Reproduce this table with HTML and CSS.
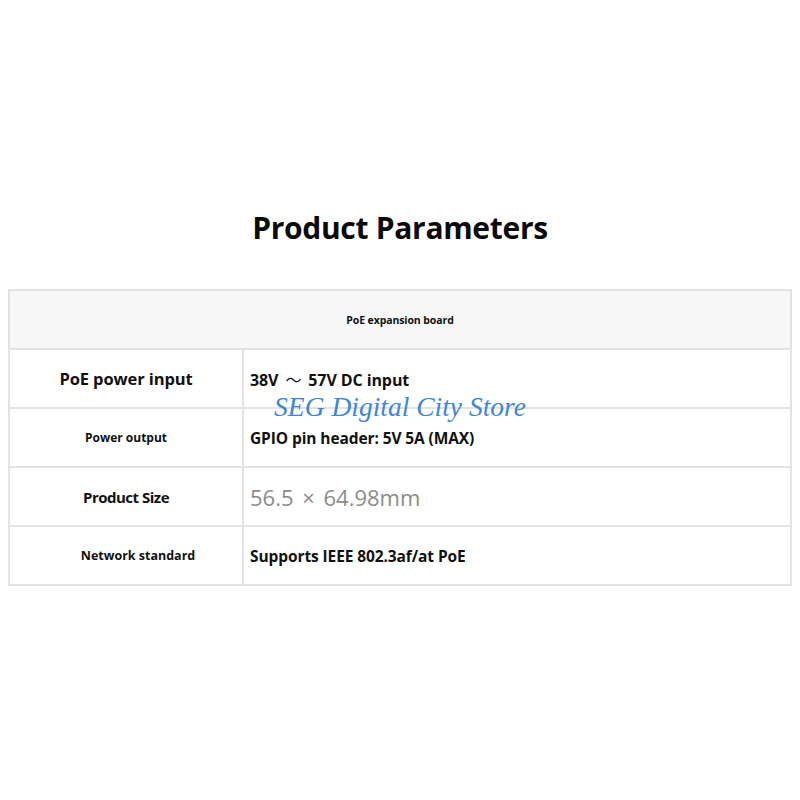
FILE: index.html
```html
<!DOCTYPE html>
<html>
<head>
<meta charset="utf-8">
<link rel="stylesheet" href="styles.css">
</head>
<body>
<div class="page">
  <h1 class="title">Product Parameters</h1>
  <div class="table-wrap">
    <table class="params">
      <colgroup><col class="c-label"><col class="c-value"></colgroup>
      <tr class="head"><td colspan="2">PoE expansion board</td></tr>
      <tr>
        <td class="label l-big">PoE power input</td>
        <td class="value v-top">38V<span class="tilde">～</span>57V DC input</td>
      </tr>
      <tr>
        <td class="label l-small">Power output</td>
        <td class="value">GPIO pin header: 5V 5A (MAX)</td>
      </tr>
      <tr>
        <td class="label l-mid">Product Size</td>
        <td class="value v-light">56.5 × 64.98mm</td>
      </tr>
      <tr>
        <td class="label l-small2">Network standard</td>
        <td class="value">Supports IEEE 802.3af/at PoE</td>
      </tr>
    </table>
    <div class="watermark">SEG Digital City Store</div>
  </div>
</div>
</body>
</html>
```

FILE: styles.css
```css
html, body {
  margin: 0;
  background: #ffffff;
}
.page {
  padding: 210px 8px 0 8px;
  font-family: "Open Sans", "Liberation Sans", "Noto Sans CJK SC", sans-serif;
  color: #111;
}
.title {
  margin: 0 0 43px 0;
  text-align: center;
  font-size: 30px;
  font-weight: 700;
  line-height: 36px;
  letter-spacing: -0.3px;
  color: #0a0a0a;
}
.table-wrap {
  position: relative;
}
.params {
  width: 784px;
  table-layout: fixed;
  border-collapse: collapse;
  border: 2px solid #e3e3e3;
}
.c-label { width: 234px; }
.params td {
  border: 2px solid #e3e3e3;
  height: 57px;
  padding: 0;
  vertical-align: middle;
}
.head td {
  background: #f7f7f7;
  text-align: center;
  font-size: 10.5px;
  font-weight: 700;
  letter-spacing: -0.1px;
  line-height: 14px;
}
.label {
  text-align: center;
  font-weight: 700;
}
.l-big { font-size: 16.5px; letter-spacing: -0.1px; }
.l-small { font-size: 12px; }
.l-mid { font-size: 15px; letter-spacing: -0.5px; }
.l-small2 { font-size: 12.5px; padding-left: 24px !important; }
.value {
  padding-left: 6px !important;
  font-size: 15.5px;
  font-weight: 700;
  letter-spacing: -0.1px;
}
.v-top {
  font-size: 16px;
}
.tilde {
  font-family: "Noto Sans CJK SC", sans-serif;
  font-weight: 400;
  padding: 0 7px;
}
.v-light {
  font-weight: 400;
  font-size: 22px;
  color: #8c8c8c;
  letter-spacing: 0;
  word-spacing: 3px;
}
.watermark {
  position: absolute;
  left: 0;
  right: 0;
  top: 102px;
  text-align: center;
  font-family: "Liberation Serif", "DejaVu Serif", serif;
  font-style: italic;
  font-size: 27.5px;
  color: #3f86d6;
  pointer-events: none;
}
```
